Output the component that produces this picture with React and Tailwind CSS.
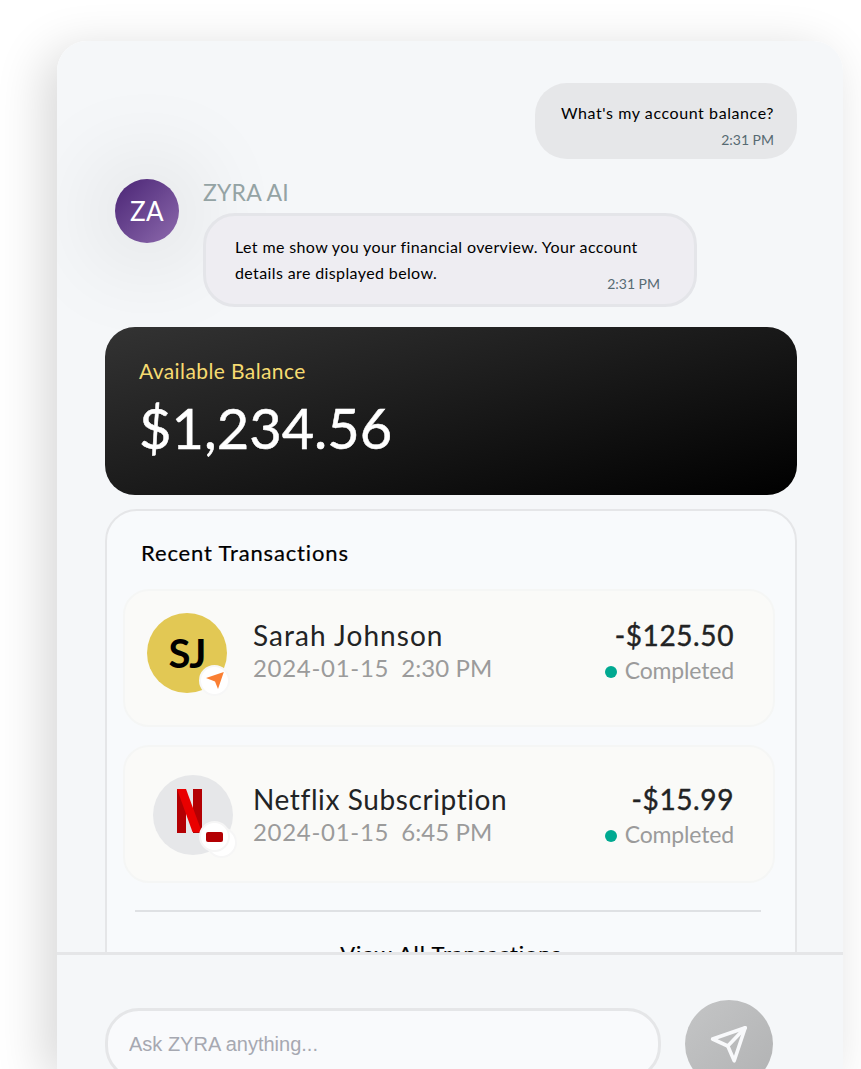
const transactions = [
  {
    id: 1,
    name: 'Sarah Johnson',
    date: '2024-01-15',
    time: '2:30 PM',
    amount: '-$125.50',
    status: 'Completed',
    body: 'pt-[22px] pl-[22px]',
    avatar: 'mr-[26px]',
    info: 'pt-[5px]',
    totals: 'pt-[5px]',
    nameSpacing: 'tracking-[1.05px]',
    icon: <SarahAvatar />,
  },
  {
    id: 2,
    name: 'Netflix Subscription',
    date: '2024-01-15',
    time: '6:45 PM',
    amount: '-$15.99',
    status: 'Completed',
    body: 'pt-[28px] pl-[28px]',
    avatar: 'mr-[20px]',
    info: 'pt-[7px]',
    totals: 'pt-[7px]',
    nameSpacing: 'tracking-[0.6px]',
    icon: <NetflixAvatar />,
  },
];

function SarahAvatar() {
  return (
    <div className="relative flex h-20 w-20 items-center justify-center rounded-full bg-[#e2c854]">
      <span className="text-[40px] leading-none font-bold tracking-[-1px] text-black">SJ</span>
      <div className="absolute top-[52px] left-[52px] flex h-[31px] w-[31px] items-center justify-center rounded-full border-2 border-[#f7f7f7] bg-white">
        <svg width="18" height="17" viewBox="0 0 18 17" fill="#fa7f33">
          <path d="M0 6 17.8 0 12 17 9 9.6Z" />
        </svg>
      </div>
    </div>
  );
}

function NetflixAvatar() {
  return (
    <div className="relative h-20 w-20 rounded-full bg-[#e6e7e9]">
      <svg className="absolute top-[14px] left-[24px]" width="25" height="44" viewBox="0 0 25 44">
        <path d="M0 0H9V44H0Z M16 0H25V44H16Z" fill="#b30003" />
        <path d="M0 0H9L25 43.5 15.5 43Z" fill="#e90000" />
      </svg>
      <div className="absolute top-[52px] left-[53px] h-[31px] w-[31px] rounded-full border-2 border-[#f6f6f6] bg-white" />
      <div className="absolute top-[46px] left-[46px] flex h-[31px] w-[31px] items-center justify-center rounded-full border-2 border-[#f6f6f6] bg-white">
        <div className="mt-px h-[10px] w-[17px] rounded-[2px] bg-[#b30003]" />
      </div>
    </div>
  );
}

function Transaction({ item }) {
  return (
    <div className={`flex h-[138px] items-start rounded-[26px] border-2 border-[#f5f6f5] bg-[#fafaf8] pr-[39px] ${item.body}`}>
      <div className={`shrink-0 ${item.avatar}`}>{item.icon}</div>
      <div className={`flex-1 whitespace-nowrap ${item.info}`}>
        <p className={`text-[28px] leading-[34px] text-[#222324] ${item.nameSpacing}`}>{item.name}</p>
        <p className="flex gap-[12px] text-[24px] leading-[32px] text-[#9b9b9b]">
          <span className="tracking-[0.7px]">{item.date}</span>
          <span className="tracking-[0.1px]">{item.time}</span>
        </p>
      </div>
      <div className={`flex flex-col items-end ${item.totals}`}>
        <p className="text-[28px] leading-[34px] tracking-[0.6px] text-[#222324] [-webkit-text-stroke:0.4px_#222324]">{item.amount}</p>
        <p className="mt-[3px] flex items-center gap-2 text-[23px] leading-[30px] tracking-[-0.15px] text-[#9b9b9b]">
          <span className="mt-[4px] h-3 w-3 rounded-full bg-[#00a991]" />
          {item.status}
        </p>
      </div>
    </div>
  );
}

function UserMessage() {
  return (
    <div className="flex h-[76px] w-[262px] shrink-0 flex-col items-end self-end rounded-[32px] bg-[#e6e7e9] pt-[19px] pr-[23px] whitespace-nowrap">
      <p className="text-[16px] leading-[22px] tracking-[0.58px] text-black">What&apos;s my account balance?</p>
      <p className="mt-[5px] text-[14px] leading-[22px] text-[#566a72]">2:31 PM</p>
    </div>
  );
}

function AssistantMessage() {
  return (
    <div className="mt-5 flex shrink-0 items-start pl-[10px]">
      <div className="flex h-16 w-16 shrink-0 items-center justify-center rounded-full bg-linear-to-br from-[#4b2475] to-[#8e6aad] text-[26px] tracking-[0.4px] text-white shadow-[0_2px_100px_6px_rgba(0,0,0,0.18)]">
        ZA
      </div>
      <div className="relative ml-6">
        <p className="-mt-px text-[23px] leading-[28px] tracking-[0.2px] text-[#94a3a4]">ZYRA AI</p>
        <div className="mt-[7px] h-[94px] w-[494px] rounded-[32px] border-3 border-[#e4e5e9] bg-[#eeedf2] pt-[18px] pl-[29px]">
          <p className="text-[16px] leading-[26px] tracking-[0.38px] whitespace-nowrap text-black">
            Let me show you your financial overview. Your account
            <br />
            details are displayed below.
          </p>
          <p className="-mt-[12px] pr-[34px] text-right text-[14px] leading-[20px] text-[#566a72]">2:31 PM</p>
        </div>
      </div>
    </div>
  );
}

function BalanceCard() {
  return (
    <div className="mt-5 h-[168px] shrink-0 rounded-[30px] bg-[linear-gradient(165deg,#333_0%,#000_100%)] pt-[31px] pl-[34px]">
      <p className="text-[21px] leading-[26px] tracking-[0.4px] text-[#f6db71]">Available Balance</p>
      <p className="mt-[9px] text-[56px] leading-[70px] text-white [-webkit-text-stroke:0.5px_#fff]">$1,234.56</p>
    </div>
  );
}

function RecentTransactions() {
  return (
    <div className="mt-[14px] h-[520px] shrink-0 rounded-[32px] border-2 border-[#e5e6e8] bg-[#f8fafc] pt-[27px] pr-5 pl-4">
      <h2 className="pl-[18px] text-[22px] leading-[30px] tracking-[0.85px] text-black [-webkit-text-stroke:0.2px_#000]">Recent Transactions</h2>
      <div className="mt-[21px] flex flex-col gap-[18px]">
        {transactions.map((item) => (
          <Transaction key={item.id} item={item} />
        ))}
      </div>
      <div className="mt-[27px] mr-[14px] ml-3 h-[2px] bg-[#dfe1e4]" />
      <p className="mt-[27px] pl-1 text-center text-[22px] leading-[30px] tracking-[0.85px] text-black [-webkit-text-stroke:0.2px_#000]">
        View All Transactions
      </p>
    </div>
  );
}

function Composer() {
  return (
    <div className="flex h-[117px] shrink-0 items-start border-t-3 border-[#e5e6e8] bg-[#f5f7f9] pt-[45px] pl-12">
      <input
        type="text"
        placeholder="Ask ZYRA anything..."
        className="mt-2 h-[72px] w-[556px] rounded-[34px] border-3 border-[#e5e6e8] bg-[#f9fafc] px-[21px] font-[Liberation_Sans,sans-serif] text-[20px] text-black outline-none placeholder:text-[#a6a8b1]"
      />
      <button className="ml-6 flex h-[88px] w-[88px] shrink-0 items-center justify-center rounded-full bg-linear-to-br from-[#c4c5c6] to-[#b1b2b3]">
        <svg width="40" height="40" viewBox="0 0 40 40" fill="none" stroke="#f8f9fb" strokeWidth="3.6" strokeLinecap="round" strokeLinejoin="round">
          <path d="M3.6 15 36.2 3.8 25.2 36.8 18.8 22Z" />
          <path d="M36.2 3.8 18.8 22" />
        </svg>
      </button>
    </div>
  );
}

export default function App() {
  return (
    <div className="h-[1069px] w-[861px] overflow-hidden bg-white pt-[41px] pl-[57px] font-[Lato,sans-serif]">
      <div className="w-[786px] rounded-t-[30px] shadow-[-12px_10px_50px_rgba(0,0,0,0.16)]">
        <div className="flex h-[1028px] flex-col overflow-hidden rounded-t-[30px] bg-[#f5f7f9]">
          <div className="flex h-[911px] flex-col overflow-hidden pt-[42px] pr-[46px] pl-12">
            <UserMessage />
            <AssistantMessage />
            <BalanceCard />
            <RecentTransactions />
          </div>
          <Composer />
        </div>
      </div>
    </div>
  );
}
